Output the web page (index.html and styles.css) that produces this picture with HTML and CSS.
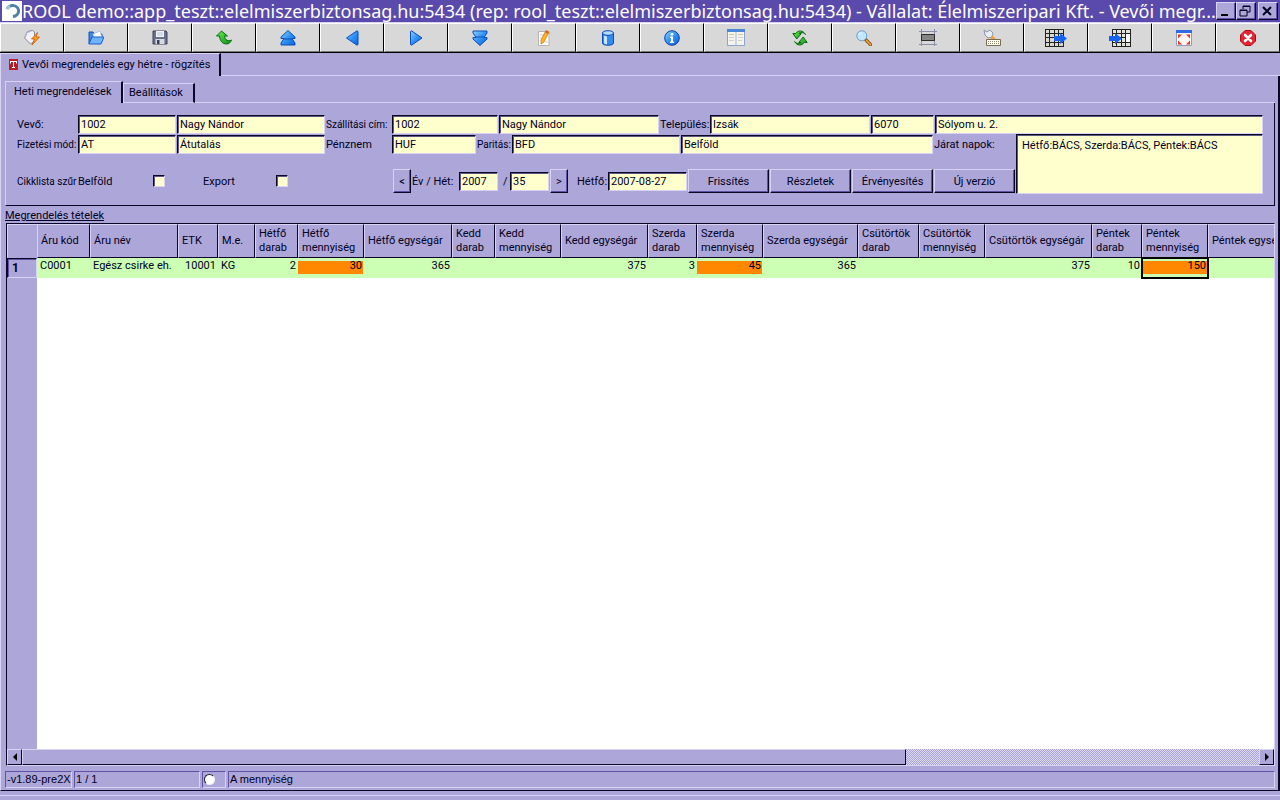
FILE: index.html
```
<!DOCTYPE html>
<html lang="hu">
<head>
    <meta charset="UTF-8">
    <title>ROOL demo - Vevői megrendelés</title>
    <link rel="stylesheet" href="styles.css">
</head>
<body>
    <header class="titlebar">
        <svg class="logo" viewBox="0 0 20 20"><rect width="20" height="20" fill="#fff"/><path d="M5 8A6 5.500 0 1 1 11 15.500" fill="none" stroke="#4d82a8" stroke-width="3"/><path d="M5 8A6 5.500 0 0 1 8 5" fill="none" stroke="#a9c4d8" stroke-width="3"/></svg>
        <h1>ROOL demo::app_teszt::elelmiszerbiztonsag.hu:5434 (rep: rool_teszt::elelmiszerbiztonsag.hu:5434) - Vállalat: Élelmiszeripari Kft. - Vevői megr...</h1>
        <div class="win-buttons">
            <button class="win" aria-label="Kis méret"><svg viewBox="0 0 16 14"><path d="M4 10h7v2H4z"/></svg></button>
            <button class="win" aria-label="Előző méret"><svg viewBox="0 0 16 14"><path d="M6 5V2h7v6h-3M6 2.500h7M3 6h7v6H3zM3 6.500h7" fill="none" stroke="#000020"/></svg></button>
            <button class="win close" aria-label="Bezárás"><svg viewBox="0 0 16 14"><path d="M4 3l8 8M12 3l-8 8" stroke="#000020" stroke-width="2"/></svg></button>
        </div>
    </header>

    <svg class="defs" aria-hidden="true">
        <defs>
            <linearGradient id="blue" x1="0" y1="0" x2="1" y2="1"><stop offset="0" stop-color="#8fd0ff"/><stop offset=".5" stop-color="#2f93f5"/><stop offset="1" stop-color="#0a62dd"/></linearGradient>
            <linearGradient id="green" x1="0" y1="0" x2="1" y2="1"><stop offset="0" stop-color="#6cf04a"/><stop offset="1" stop-color="#0c8a1c"/></linearGradient>
        </defs>
    </svg>

    <nav class="toolbar">
        <button aria-label="Végrehajtás"><svg viewBox="0 0 16 16"><path d="M3.500 1.500l5-1 2 1.500v9l-4 3-6-6z" fill="#f0f2fa" stroke="#8088a4"/><path d="M.5 8l3-6.500 2 1" fill="none" stroke="#a9b0c6"/><path d="M13.500 2.500l-6 6.500h3l-2.500 6 7.500-8h-3.500z" fill="#ff9a1c" stroke="#d05a00" stroke-width=".8"/></svg></button>
        <button aria-label="Megnyitás"><svg viewBox="0 0 16 16"><path d="M1 14V2h4l1 2h8v3" fill="#3b86e0" stroke="#1b4fb0"/><path d="M5 4l7-3 2 6-8 2z" fill="#fff" stroke="#8fb3e6" stroke-width=".7"/><path d="M4 7h12l-3 7H1z" fill="#6fb4ff" stroke="#1d5fd0"/></svg></button>
        <button aria-label="Mentés"><svg viewBox="0 0 16 16"><path d="M1 1h13l1 1v12H1z" fill="#68708a" stroke="#3c4258"/><path d="M4 1h8v6H4z" fill="#f2f4fa"/><path d="M5 3h6M5 5h6" stroke="#b8bfd0"/><path d="M3.500 9h9v5h-9z" fill="#d5d9e4"/><path d="M5 10h2.500v4H5z" fill="#3c4258"/></svg></button>
        <button aria-label="Visszavonás"><svg viewBox="0 0 16 16"><path d="M5.500 1L.5 6h3c.5 5 3 8 7 8 2.500 0 4-1.500 5-4-3 1.500-6.500.5-7-4h3z" fill="url(#green)" stroke="#0a6b16"/></svg></button>
        <button aria-label="Első"><svg viewBox="0 0 16 16"><path d="M8 .5L15 7v1.500h-3l3 4.500v2H1v-2l3-4.500H1V7z" fill="url(#blue)" stroke="#0b4dbb"/><path d="M4 9h8" stroke="#0b4dbb"/></svg></button>
        <button aria-label="Előző"><svg viewBox="0 0 16 16"><path d="M2.500 8L13 .8q1 .2 1 1.200v12q0 1-1 1.200z" fill="url(#blue)" stroke="#0b4dbb"/></svg></button>
        <button aria-label="Következő"><svg viewBox="0 0 16 16"><path d="M14 8L3.500.8q-1 .2-1 1.200v12q0 1 1 1.200z" fill="url(#blue)" stroke="#0b4dbb"/></svg></button>
        <button aria-label="Utolsó"><svg viewBox="0 0 16 16"><path d="M8 15.500L1 9V7.500h3L1 3V1h14v2l-3 4.500h3V9z" fill="url(#blue)" stroke="#0b4dbb"/><path d="M4 7h8" stroke="#0b4dbb"/></svg></button>
        <button aria-label="Szerkesztés"><svg viewBox="0 0 16 16"><path d="M2.500 1.500h10.500v14H2.500z" fill="#fff" stroke="#b4b4b4"/><path d="M4 5h4M4 8h2M9 12h3" stroke="#c8c8c8"/><path d="M10 .5l3 1.500-5 10-3 2v-4z" fill="#ffb321" stroke="#c87400" stroke-width=".7"/><path d="M10 .5l3 1.500-1 2-3-1.500z" fill="#d8643c"/></svg></button>
        <button aria-label="Adatbázis"><svg viewBox="0 0 16 16"><path d="M2.500 3v10c0 3 11 3 11 0V3z" fill="#2f8bf0" stroke="#0b4dbb"/><path d="M4 5.500v8l3 1V6.500z" fill="#c9e6ff"/><ellipse cx="8" cy="3" rx="5.500" ry="2.300" fill="#b5dcff" stroke="#0b4dbb"/></svg></button>
        <button aria-label="Információ"><svg viewBox="0 0 16 16"><circle cx="8" cy="8" r="7.300" fill="url(#blue)" stroke="#0a3fa6"/><circle cx="8" cy="4.300" r="1.400" fill="#fff"/><path d="M6 6.500h3v5h1V13H6v-1.500h1V8H6z" fill="#fff"/></svg></button>
        <button aria-label="Űrlap"><svg class="wide" viewBox="0 0 18 17"><path d="M.5.5h17v16H.5z" fill="#f4f4ee" stroke="#8aa6d0"/><path d="M0 0h18v3H0z" fill="#4a86d8"/><path d="M9 3v14" stroke="#9eb6dc"/><path d="M2 5.500h5M11 5.500h5" stroke="#d8c48a"/><path d="M2 8.500h5M2 11.500h5M11 8.500h5M11 11.500h4" stroke="#d2d2c6"/></svg></button>
        <button aria-label="Frissítés"><svg viewBox="0 0 16 16"><path d="M13.500 4.500C11 0 6 0 3.800 3.500H.8l4 5.500 4.500-5.500H7c1.500-1.500 4.500-1.500 6.500 1z" fill="url(#green)" stroke="#0a6b16"/><path d="M2.500 11.500c2.500 4.500 7.500 4.500 9.700 1h3l-4-5.500-4.500 5.500H9c-1.500 1.500-4.500 1.500-6.500-1z" fill="url(#green)" stroke="#0a6b16"/></svg></button>
        <button aria-label="Keresés"><svg viewBox="0 0 16 16"><path d="M9.500 9.500l5 5" stroke="#9a5a14" stroke-width="3.400" stroke-linecap="round"/><path d="M10.500 10.500l4 4" stroke="#f0a848" stroke-width="1.400" stroke-linecap="round"/><circle cx="5.800" cy="5.800" r="5" fill="#bfe8ff" stroke="#6f9cc4"/><path d="M3 5c.5-1.500 2-2 3-2" fill="none" stroke="#fff"/></svg></button>
        <button aria-label="Keret"><svg class="wide" viewBox="0 0 18 17"><path d="M0 2.500h18M0 15.500h18M2.500 0v17M15.500 0v17" stroke="#8a90a8"/><path d="M2.500 5.500h13v6h-13z" fill="#858585" stroke="#2c2c2c"/></svg></button>
        <button aria-label="Billentyűzet"><svg class="wide" viewBox="0 0 18 17"><path d="M1 1l3 2 3-2 3 3-1 4-4 1-3-3z" fill="#e8eef8" stroke="#8b94a8"/><path d="M9 6l5 5H7z" fill="#f0a040"/><path d="M3.500 10.500h14v6h-14z" fill="#fffdf0" stroke="#7a6c50"/><path d="M5 12.500h11M5 14.500h11" stroke="#8a8470" stroke-dasharray="1 1"/></svg></button>
        <button aria-label="Táblázat export"><svg class="grid-icon" viewBox="0 0 22 18"><path d="M.5.5h18v17H.5z" fill="#d8d8d0"/><path d="M0 .5h19M0 4.500h19M0 8.500h19M0 13.500h19M0 17.500h19M.5 0v18M4.500 0v18M9.500 0v18M13.500 0v18M18.500 0v18" stroke="#222"/><path d="M9 7h6V4l7 5.500-7 5.500v-3H9z" fill="#1464f0"/></svg></button>
        <button aria-label="Táblázat import"><svg class="grid-icon" viewBox="0 0 22 18"><path d="M3 .5h18v17H3z" fill="#e4e4dc"/><path d="M3 .5h19M3 4.500h19M3 8.500h19M3 13.500h19M3 17.500h19M3.500 0v18M7.500 0v18M12.500 0v18M16.500 0v18M21.500 0v18" stroke="#222"/><path d="M17 5h4v8h-4z" fill="#fff"/><path d="M0 7h6V4l7 5.500-7 5.500v-3H0z" fill="#1464f0"/></svg></button>
        <button aria-label="Teljes képernyő"><svg viewBox="0 0 16 16"><path d="M.5.5h15v15H.5z" fill="#fdf6f2" stroke="#8e9cc8"/><path d="M0 0h16v3H0z" fill="#2c6ce0"/><path d="M2 4.500h4l-4 4zM14 4.500v4l-4-4zM2 14.500v-4l4 4zM14 14.500h-4l4-4z" fill="#e03420"/></svg></button>
        <button aria-label="Kilépés"><svg viewBox="0 0 16 16"><path d="M5 .5h6L15.500 5v6L11 15.500H5L.5 11V5z" fill="#e42230" stroke="#b00818"/><path d="M5 5l6 6M11 5l-6 6" stroke="#fff" stroke-width="2.600" stroke-linecap="round"/></svg></button>
    </nav>

    <div class="main-tabs">
        <button class="main-tab"><svg class="t-icon" viewBox="0 0 9 11"><path d="M0 0h9v11H0z" fill="#b81c24"/><path d="M1 2.500h7M4.500 2v7M3 8.500h3M1.500 2v2.500M7.500 2v2.500" stroke="#fff"/></svg>Vevői megrendelés egy hétre - rögzítés</button>
        <div class="tab-rest"></div>
    </div>

    <main class="page">
        <div class="sub-tabs">
            <button class="sub-tab active">Heti megrendelések</button>
            <button class="sub-tab">Beállítások</button>
            <div class="tab-rest"></div>
        </div>

        <form class="panel">
            <div class="row">
                <label class="w-60" for="vevo">Vevő:</label>
                <input class="w-98" id="vevo" type="text" value="1002">
                <input class="w-148" aria-label="Vevő neve" type="text" value="Nagy Nándor">
                <label class="w-65 small" for="cim">Szállítási cím:</label>
                <input class="w-106" id="cim" type="text" value="1002">
                <input class="w-160" aria-label="Szállítási név" type="text" value="Nagy Nándor">
                <label class="w-49" for="telepules">Település:</label>
                <input class="w-160" id="telepules" type="text" value="Izsák">
                <input class="w-63" aria-label="Irányítószám" type="text" value="6070">
                <input class="grow" aria-label="Utca" type="text" value="Sólyom u. 2.">
            </div>
            <div class="lower">
                <div class="lower-left">
                    <div class="row">
                        <label class="w-60 small" for="mod">Fizetési mód:</label>
                        <input class="w-98" id="mod" type="text" value="AT">
                        <input class="w-148" aria-label="Fizetési mód neve" type="text" value="Átutalás">
                        <label class="w-65" for="penznem">Pénznem</label>
                        <input class="w-84" id="penznem" type="text" value="HUF">
                        <label class="w-34 small" for="paritas">Paritás:</label>
                        <input class="w-168" id="paritas" type="text" value="BFD">
                        <input class="w-252" aria-label="Paritás neve" type="text" value="Belföld">
                        <label for="jarat">Járat napok:</label>
                    </div>
                    <div class="row tools">
                        <span class="w-60 small">Cikklista szűr</span>
                        <label class="w-74" for="belfold">Belföld</label>
                        <input id="belfold" type="checkbox">
                        <label class="export" for="export">Export</label>
                        <input id="export" type="checkbox">
                        <div class="week">
                            <button class="btn arrow" type="button">&lt;</button>
                            <label class="w-46" for="ev">Év / Hét:</label>
                            <input class="w-39" id="ev" type="text" value="2007">
                            <label class="slash" for="het">/</label>
                            <input class="w-39" id="het" type="text" value="35">
                            <button class="btn arrow" type="button">&gt;</button>
                        </div>
                        <label class="monday" for="hetfo">Hétfő:</label>
                        <input class="w-79" id="hetfo" type="text" value="2007-08-27">
                        <button class="btn" type="button">Frissítés</button>
                        <button class="btn" type="button">Részletek</button>
                        <button class="btn" type="button">Érvényesítés</button>
                        <button class="btn" type="button">Új verzió</button>
                    </div>
                </div>
                <textarea id="jarat">Hétfő:BÁCS, Szerda:BÁCS, Péntek:BÁCS</textarea>
            </div>
        </form>

        <h2>Megrendelés tételek</h2>

        <section class="items">
            <div class="items-view">
                <table>
                    <colgroup>
                        <col class="c-30"><col class="c-53"><col class="c-88"><col class="c-40"><col class="c-37"><col class="c-43"><col class="c-66"><col class="c-88"><col class="c-43"><col class="c-66"><col class="c-87"><col class="c-49"><col class="c-66"><col class="c-95"><col class="c-61"><col class="c-66"><col class="c-107"><col class="c-50"><col class="c-66"><col class="c-95">
                    </colgroup>
                    <thead>
                        <tr>
                            <th class="corner"></th>
                            <th>Áru kód</th>
                            <th>Áru név</th>
                            <th>ETK</th>
                            <th>M.e.</th>
                            <th>Hétfő<br>darab</th>
                            <th>Hétfő<br>mennyiség</th>
                            <th>Hétfő egységár</th>
                            <th>Kedd<br>darab</th>
                            <th>Kedd<br>mennyiség</th>
                            <th>Kedd egységár</th>
                            <th>Szerda<br>darab</th>
                            <th>Szerda<br>mennyiség</th>
                            <th>Szerda egységár</th>
                            <th>Csütörtök<br>darab</th>
                            <th>Csütörtök<br>mennyiség</th>
                            <th>Csütörtök egységár</th>
                            <th>Péntek<br>darab</th>
                            <th>Péntek<br>mennyiség</th>
                            <th>Péntek egységár</th>
                        </tr>
                    </thead>
                    <tbody>
                        <tr>
                            <th class="row-no">1</th>
                            <td>C0001</td>
                            <td>Egész csirke eh.</td>
                            <td class="num">10001</td>
                            <td>KG</td>
                            <td class="num">2</td>
                            <td class="num qty">30</td>
                            <td class="num">365</td>
                            <td></td>
                            <td></td>
                            <td class="num">375</td>
                            <td class="num">3</td>
                            <td class="num qty">45</td>
                            <td class="num">365</td>
                            <td></td>
                            <td></td>
                            <td class="num">375</td>
                            <td class="num">10</td>
                            <td class="num qty current">150</td>
                            <td></td>
                        </tr>
                    </tbody>
                </table>
            </div>
            <div class="scrollbar">
                <button class="scroll-btn" aria-label="Balra"><svg viewBox="0 0 8 8"><path d="M6 0v8L2 4z"/></svg></button>
                <div class="track"><div class="thumb"></div></div>
                <button class="scroll-btn" aria-label="Jobbra"><svg viewBox="0 0 8 8"><path d="M2 0v8l4-4z"/></svg></button>
            </div>
        </section>

        <footer class="status">
            <span class="version">-v1.89-pre2X</span>
            <span class="count">1 / 1</span>
            <span class="state"><input type="radio" aria-label="Állapot"></span>
            <span class="grow">A mennyiség</span>
        </footer>
    </main>
    <div class="bottom-edge"></div>
</body>
</html>
```
FILE: styles.css
```
:root {
    --face: #ada6d8;
    --light: #d8d3f4;
    --shade: #5f52a6;
    --dark: #0a0628;
    --field: #ffffce;
}

* {
    box-sizing: border-box;
}

body {
    margin: 0;
    height: 100vh;
    display: flex;
    flex-direction: column;
    overflow: hidden;
    background: var(--face);
    color: #000020;
    font: 11px/13px Roboto, "Liberation Sans", sans-serif;
}

button, input, textarea {
    margin: 0;
    border: 0;
    border-radius: 0;
    color: inherit;
    font: inherit;
}

button {
    padding: 0;
    background: var(--face);
}

.defs {
    position: absolute;
    width: 0;
    height: 0;
}

/* title bar */
.titlebar {
    display: flex;
    align-items: center;
    height: 23px;
    padding: 0 2px;
    background: #5a4aac;
    border-bottom: 1px solid var(--light);
}

.logo {
    width: 20px;
    height: 20px;
}

.titlebar h1 {
    flex: 1;
    min-width: 0;
    margin: 0;
    white-space: nowrap;
    color: #fff;
    font: 18px/22px "Noto Sans", sans-serif;
}

.win-buttons {
    display: flex;
}

.win {
    width: 20px;
    height: 18px;
    border: 1px solid;
    border-color: var(--light) var(--dark) var(--dark) var(--light);
    box-shadow: inset -1px -1px var(--shade);
}

.win.close {
    margin-left: 2px;
}

.win svg {
    display: block;
    width: 16px;
    height: 14px;
}

/* toolbar */
.toolbar {
    display: flex;
    height: 30px;
    border-bottom: 1px solid #000;
}

.toolbar button {
    display: flex;
    flex: 1;
    align-items: center;
    justify-content: center;
    background: #d8d8d8;
    border: 1px solid;
    border-color: #fff #000 #777 #fff;
}

.toolbar svg {
    width: 16px;
    height: 16px;
}

.toolbar svg.wide {
    width: 18px;
    height: 17px;
}

.toolbar svg.grid-icon {
    width: 22px;
    height: 18px;
}

/* tabs */
.main-tabs {
    display: flex;
    height: 23px;
}

.tab-rest {
    flex: 1;
    border-bottom: 1px solid var(--light);
}

.main-tab {
    display: flex;
    align-items: center;
    width: 221px;
    padding: 0 0 2px 8px;
    border-top: 1px solid var(--light);
    border-left: 1px solid var(--light);
    border-right: 2px solid var(--dark);
    white-space: nowrap;
}

.t-icon {
    width: 9px;
    height: 11px;
    margin-right: 4px;
}

.page {
    display: flex;
    flex: 1;
    flex-direction: column;
    min-height: 0;
    padding: 5px 3px 2px 4px;
    border-left: 1px solid var(--light);
    border-right: 2px solid var(--dark);
    border-bottom: 1px solid var(--dark);
}

.sub-tabs {
    display: flex;
    align-items: flex-end;
    height: 22px;
}

.sub-tabs .tab-rest {
    align-self: stretch;
}

.sub-tab {
    width: 72px;
    height: 20px;
    padding: 0 0 2px 5px;
    border: 1px solid var(--light);
    border-right: 2px solid var(--dark);
    text-align: left;
}

.sub-tab.active {
    width: 118px;
    height: 22px;
    padding-left: 8px;
    border-bottom: 0;
}

/* order form */
.panel {
    height: 103px;
    padding: 11px 11px 0;
    border-left: 1px solid var(--light);
    border-right: 1px solid var(--dark);
    border-bottom: 1px solid var(--dark);
}

.row {
    display: flex;
    gap: 1px;
    align-items: center;
    height: 20px;
    white-space: nowrap;
}

.lower {
    display: flex;
    gap: 1px;
}

.lower-left {
    width: 998px;
}

.tools {
    height: 24px;
    margin-top: 15px;
}

.small {
    font-size: 10px;
}

input[type="text"], textarea {
    height: 19px;
    padding: 0 0 0 2px;
    background: var(--field);
    border: 1px solid;
    border-color: var(--dark) var(--light) var(--light) var(--dark);
    box-shadow: inset 1px 1px #5c5880;
}

textarea {
    flex: 1;
    min-width: 0;
    height: 60px;
    padding: 4px 5px;
    resize: none;
}

input[type="checkbox"] {
    appearance: none;
    width: 12px;
    height: 12px;
    background: var(--field);
    border: 1px solid;
    border-color: var(--dark) var(--light) var(--light) var(--dark);
    box-shadow: inset 1px 1px #5c5880;
}

.btn {
    width: 81px;
    height: 24px;
    border: 1px solid;
    border-color: var(--light) var(--dark) var(--dark) var(--light);
    box-shadow: inset -1px -1px var(--shade);
}

.btn.arrow {
    width: 18px;
}

.week {
    display: flex;
    gap: 1px;
    align-items: center;
    margin-left: 104px;
}

.slash {
    width: 10px;
    padding-left: 4px;
}

.export {
    width: 109px;
    padding-left: 37px;
}

.monday {
    width: 38px;
    padding-left: 8px;
}

.grow { flex: 1; min-width: 0; }
.w-34 { width: 34px; }
.w-39 { width: 39px; }
.w-46 { width: 46px; }
.w-49 { width: 49px; }
.w-60 { width: 60px; }
.w-63 { width: 63px; }
.w-65 { width: 65px; }
.w-74 { width: 74px; }
.w-79 { width: 79px; }
.w-84 { width: 84px; }
.w-98 { width: 98px; }
.w-106 { width: 106px; }
.w-148 { width: 148px; }
.w-160 { width: 160px; }
.w-168 { width: 168px; }
.w-252 { width: 252px; }

/* items */
h2 {
    margin: 3px 0 1px;
    font: inherit;
    text-decoration: underline;
}

.items {
    display: flex;
    flex: 1;
    flex-direction: column;
    min-height: 0;
    margin-left: 1px;
    border: 1px solid;
    border-color: var(--dark) var(--light) var(--light) var(--dark);
}

.items-view {
    flex: 1;
    overflow: hidden;
    background: linear-gradient(to right, var(--face) 30px, #fff 30px);
}

table {
    width: 1294px;
    table-layout: fixed;
    border-collapse: separate;
    border-spacing: 0;
}

thead th {
    height: 34px;
    padding: 0 0 0 3px;
    background: var(--face);
    border: 1px solid;
    border-color: var(--light) var(--dark) var(--dark) var(--light);
    font-weight: normal;
    text-align: left;
    line-height: 14px;
    white-space: nowrap;
}

thead .corner {
    border-right: 0;
    border-bottom-color: var(--face);
}

tbody td {
    height: 20px;
    padding: 0 3px;
    background: #ccffb3;
    line-height: 15px;
    vertical-align: top;
    white-space: nowrap;
}

tbody .num {
    padding-right: 2px;
    text-align: right;
}

tbody .qty {
    background: linear-gradient(#ff8800, #ff8800) 0 3px / 65px 13px no-repeat #ccffb3;
}

tbody .current {
    outline: 2px solid #000;
    outline-offset: -1px;
}

.row-no {
    padding: 0 0 0 4px;
    border: 1px solid;
    border-color: var(--dark) var(--light) var(--light) var(--dark);
    box-shadow: inset 1px 1px var(--shade);
    text-align: left;
    font-size: 12px;
}

.c-30 { width: 30px; }
.c-37 { width: 37px; }
.c-40 { width: 40px; }
.c-43 { width: 43px; }
.c-49 { width: 49px; }
.c-50 { width: 50px; }
.c-53 { width: 53px; }
.c-61 { width: 61px; }
.c-66 { width: 66px; }
.c-87 { width: 87px; }
.c-88 { width: 88px; }
.c-95 { width: 95px; }
.c-107 { width: 107px; }

.scrollbar {
    display: flex;
    height: 16px;
}

.scroll-btn {
    width: 15px;
    border: 1px solid;
    border-color: var(--light) var(--dark) var(--dark) var(--light);
}

.scroll-btn svg {
    display: block;
    width: 8px;
    height: 8px;
    margin: 0 auto;
}

.track {
    flex: 1;
    background: repeating-conic-gradient(#dcd8f0 0 25%, #aaa4d4 0 50%) 0 0 / 2px 2px;
}

.thumb {
    width: 71.5%;
    height: 16px;
    background: var(--face);
    border: 1px solid;
    border-color: var(--light) var(--dark) var(--dark) var(--light);
}

/* status bar */
.status {
    display: flex;
    gap: 2px;
    margin-top: 5px;
    white-space: nowrap;
    font: 11px/15px "Liberation Sans", sans-serif;
}

.status span {
    height: 17px;
    padding: 0 1px;
    overflow: hidden;
    border: 1px solid;
    border-color: var(--shade) var(--light) var(--light) var(--shade);
}

.status .version {
    width: 67px;
}

.status .count {
    width: 126px;
}

.status .state {
    width: 24px;
}

.state input {
    appearance: none;
    display: block;
    width: 11px;
    height: 11px;
    margin-top: 2px;
    background: #fff;
    border: 1px solid;
    border-color: #222 #eee #eee #222;
    border-radius: 50%;
}

.bottom-edge {
    height: 9px;
    background: linear-gradient(var(--light), var(--light)) 0 4px / 100% 1px no-repeat;
}
```
